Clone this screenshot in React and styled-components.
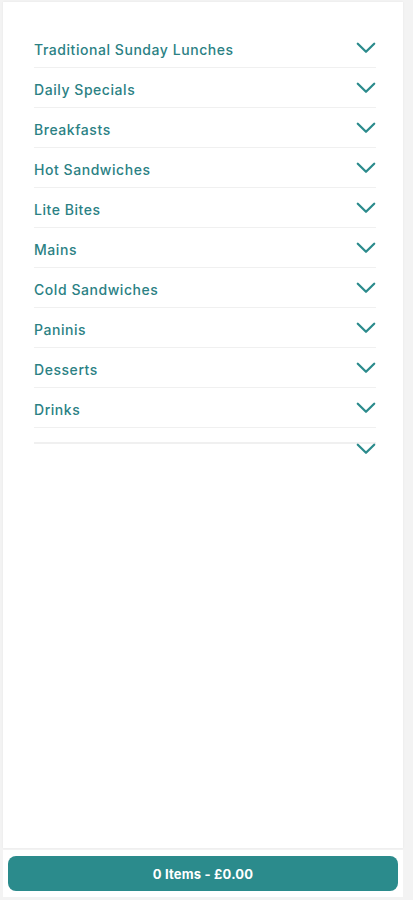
import React from 'react';
import styled, { createGlobalStyle } from 'styled-components';

const GlobalStyle = createGlobalStyle`
  html, body {
    margin: 0;
    padding: 0;
    background: #f3f3f3;
  }
  * {
    box-sizing: border-box;
  }
`;

const colors = {
  teal: '#2b8b8c',
  text: '#2b8184',
  line: '#f0f0f0',
};

const Page = styled.div`
  display: flex;
  flex-direction: column;
  height: 900px;
  width: 413px;
  padding: 2px 10px 3px 3px;
  font-family: Inter, 'Noto Sans', sans-serif;
`;

const Card = styled.div`
  flex: 1;
  background: #fff;
  padding: 26px 27px 0 31px;
  box-shadow: 0 0 2px rgba(0, 0, 0, 0.06);
`;

const List = styled.ul`
  list-style: none;
  margin: 0;
  padding: 0;
`;

const Item = styled.li`
  display: flex;
  align-items: center;
  justify-content: space-between;
  height: 40px;
  padding: 3px 0 0;
  border-bottom: 1px solid ${colors.line};
`;

const EmptyItem = styled.li`
  display: flex;
  justify-content: flex-end;
  margin-top: 14px;
  padding-top: 1px;
  border-top: 2px solid ${colors.line};
`;

const Title = styled.span`
  font-size: 14px;
  font-weight: 500;
  color: ${colors.text};
  letter-spacing: 0.55px;
`;

const Chevron = ({ className }) => (
  <svg className={className} width="20" height="12" viewBox="0 0 20 12" fill="none">
    <path d="M1.8 1.8 L10 9.8 L18.2 1.8" stroke={colors.teal} strokeWidth="2.3" strokeLinecap="round" strokeLinejoin="round" />
  </svg>
);

const Arrow = styled(Chevron)`
  flex: none;
  margin-top: -2px;
`;

const Footer = styled.div`
  margin-top: 2px;
  height: 47px;
  background: #fff;
  padding: 6px 5px;
`;

const BasketButton = styled.button`
  width: 100%;
  height: 35px;
  border: none;
  border-radius: 8px;
  background: ${colors.teal};
  color: #fff;
  font-family: Inter, 'Noto Sans', sans-serif;
  font-size: 13px;
  font-weight: 700;
  letter-spacing: 0.2px;
  cursor: pointer;
`;

const categories = [
  'Traditional Sunday Lunches',
  'Daily Specials',
  'Breakfasts',
  'Hot Sandwiches',
  'Lite Bites',
  'Mains',
  'Cold Sandwiches',
  'Paninis',
  'Desserts',
  'Drinks',
];

export default function App() {
  return (
    <>
      <GlobalStyle />
      <Page>
        <Card>
          <List>
            {categories.map((name) => (
              <Item key={name}>
                <Title>{name}</Title>
                <Arrow />
              </Item>
            ))}
            <EmptyItem>
              <Arrow />
            </EmptyItem>
          </List>
        </Card>
        <Footer>
          <BasketButton>0 Items - £0.00</BasketButton>
        </Footer>
      </Page>
    </>
  );
}
